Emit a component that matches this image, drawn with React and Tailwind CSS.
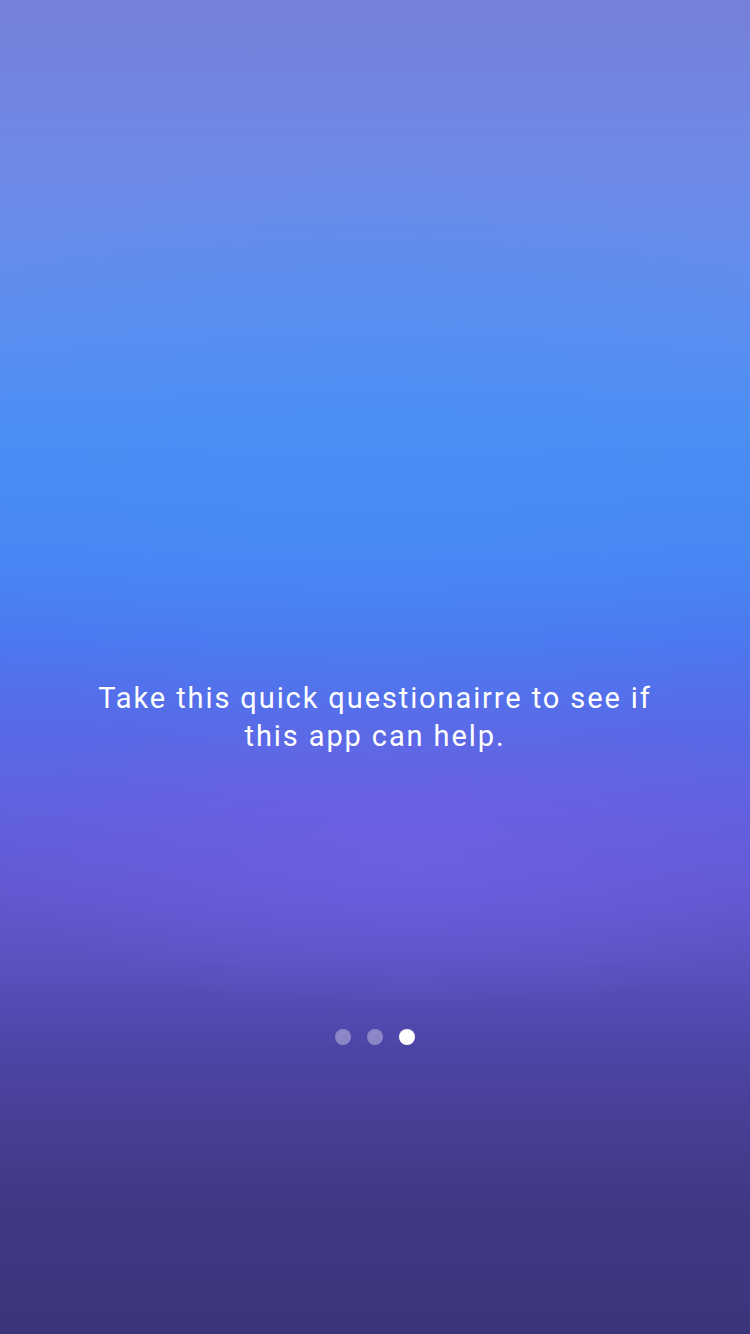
const Dots = ({ count, active }) => {
    return (
        <div className="flex items-center justify-center gap-4">
            {Array.from({ length: count }).map((_, i) => (
                <span
                    key={i}
                    className={i === active ? "w-4 h-4 rounded-full bg-white" : "w-4 h-4 rounded-full bg-white/35"}
                />
            ))}
        </div>
    )
}

const App = () => {
    return (
        <div className="relative w-[750px] h-[1334px] overflow-hidden bg-[linear-gradient(180deg,#7680d8_0%,#6e8ae8_13%,#5c8ef0_24%,#4a8ef4_33%,#4886f4_42%,#4c78f0_48%,#566ce8_53%,#6062e0_60%,#6258d0_67%,#5a52c0_72%,#4e46a8_78%,#473f94_84%,#413886_90%,#3c347a_100%)]">
            <div className="absolute inset-0 bg-[radial-gradient(ellipse_58%_12%_at_55%_64%,rgba(112,96,228,0.75),transparent)]" />
            <div className="absolute inset-0 bg-[radial-gradient(ellipse_60%_25%_at_50%_35%,rgba(70,145,245,0.3),transparent)]" />
            <div className="relative flex flex-col items-center pt-[679px]">
                <p className="w-[580px] text-center text-white text-[29px] leading-[38px] tracking-[1.9px] font-['Roboto',sans-serif]">
                    Take this quick questionairre to see if this app can help.
                </p>
                <div className="mt-[274px]">
                    <Dots count={3} active={2} />
                </div>
            </div>
        </div>
    )
}

export default App;
